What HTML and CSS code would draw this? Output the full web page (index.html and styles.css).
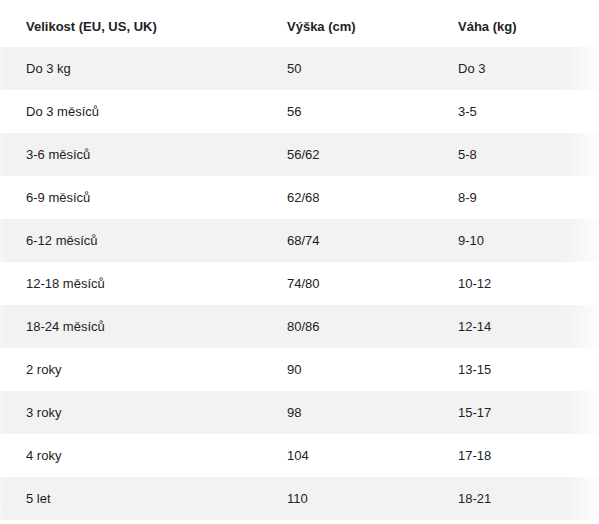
FILE: index.html
```html
<!DOCTYPE html>
<html lang="cs">
<head>
<meta charset="utf-8">
<link rel="stylesheet" href="styles.css">
</head>
<body>
<div class="table">
  <div class="row head"><div class="cell">Velikost (EU, US, UK)</div><div class="cell">Výška (cm)</div><div class="cell">Váha (kg)</div></div>
  <div class="row alt"><div class="cell">Do 3 kg</div><div class="cell">50</div><div class="cell">Do 3</div></div>
  <div class="row"><div class="cell">Do 3 měsíců</div><div class="cell">56</div><div class="cell">3-5</div></div>
  <div class="row alt"><div class="cell">3-6 měsíců</div><div class="cell">56/62</div><div class="cell">5-8</div></div>
  <div class="row"><div class="cell">6-9 měsíců</div><div class="cell">62/68</div><div class="cell">8-9</div></div>
  <div class="row alt"><div class="cell">6-12 měsíců</div><div class="cell">68/74</div><div class="cell">9-10</div></div>
  <div class="row"><div class="cell">12-18 měsíců</div><div class="cell">74/80</div><div class="cell">10-12</div></div>
  <div class="row alt"><div class="cell">18-24 měsíců</div><div class="cell">80/86</div><div class="cell">12-14</div></div>
  <div class="row"><div class="cell">2 roky</div><div class="cell">90</div><div class="cell">13-15</div></div>
  <div class="row alt"><div class="cell">3 roky</div><div class="cell">98</div><div class="cell">15-17</div></div>
  <div class="row"><div class="cell">4 roky</div><div class="cell">104</div><div class="cell">17-18</div></div>
  <div class="row alt"><div class="cell">5 let</div><div class="cell">110</div><div class="cell">18-21</div></div>
</div>
</body>
</html>
```
FILE: styles.css
```css
html, body {
  margin: 0;
  padding: 0;
  background: #fff;
}
body {
  font-family: "Liberation Sans", Arial, sans-serif;
  font-size: 13px;
  color: #222;
}
.table {
  display: flex;
  flex-direction: column;
  width: 599px;
}
.row {
  display: grid;
  grid-template-columns: 261px 171px 1fr;
  height: 43px;
  align-items: center;
}
.row.head {
  height: 47px;
  padding-top: 5px;
  box-sizing: border-box;
  font-weight: bold;
}
.row.alt {
  background: linear-gradient(to right, #f7f7f7 0, #f2f2f2 4px, #f2f2f2 calc(100% - 32px), #fdfdfd 100%);
}
.cell {
  padding-left: 26px;
  white-space: nowrap;
}
```
